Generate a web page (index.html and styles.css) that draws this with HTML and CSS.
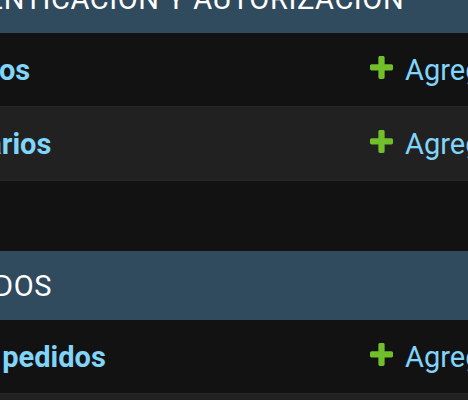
FILE: index.html
```html
<!DOCTYPE html>
<html lang="es">
<head>
<meta charset="utf-8">
<title>Administración</title>
<link rel="stylesheet" href="styles.css">
</head>
<body>
<div class="content">
  <div class="module first">
    <div class="caption">Autenticación y autorización</div>
    <div class="row">
      <a class="name" href="#">Grupos</a>
      <a class="add" href="#"><svg class="plus" viewBox="192 192 1408 1408" width="23" height="23"><path fill="#70bf2b" d="M1600 796v192q0 40-28 68t-68 28h-416v416q0 40-28 68t-68 28h-192q-40 0-68-28t-28-68v-416h-416q-40 0-68-28t-28-68v-192q0-40 28-68t68-28h416v-416q0-40 28-68t68-28h192q40 0 68 28t28 68v416h416q40 0 68 28t28 68z"/></svg>Agregar</a>
      <a class="change" href="#">Modificar</a>
    </div>
    <div class="row alt">
      <a class="name" href="#">Usuarios</a>
      <a class="add" href="#"><svg class="plus" viewBox="192 192 1408 1408" width="23" height="23"><path fill="#70bf2b" d="M1600 796v192q0 40-28 68t-68 28h-416v416q0 40-28 68t-68 28h-192q-40 0-68-28t-28-68v-416h-416q-40 0-68-28t-28-68v-192q0-40 28-68t68-28h416v-416q0-40 28-68t68-28h192q40 0 68 28t28 68v416h416q40 0 68 28t28 68z"/></svg>Agregar</a>
      <a class="change" href="#">Modificar</a>
    </div>
  </div>
  <div class="module">
    <div class="caption">Pedidos</div>
    <div class="row">
      <a class="name" href="#">Ítem pedidos</a>
      <a class="add" href="#"><svg class="plus" viewBox="192 192 1408 1408" width="23" height="23"><path fill="#70bf2b" d="M1600 796v192q0 40-28 68t-68 28h-416v416q0 40-28 68t-68 28h-192q-40 0-68-28t-28-68v-416h-416q-40 0-68-28t-28-68v-192q0-40 28-68t68-28h416v-416q0-40 28-68t68-28h192q40 0 68 28t28 68v416h416q40 0 68 28t28 68z"/></svg>Agregar</a>
      <a class="change" href="#">Modificar</a>
    </div>
    <div class="row alt">
      <a class="name" href="#">Pedidos</a>
      <a class="add" href="#">Agregar</a>
      <a class="change" href="#">Modificar</a>
    </div>
  </div>
</div>
</body>
</html>
```
FILE: styles.css
```css
html, body {
  margin: 0;
  padding: 0;
  background: #121212;
  overflow: hidden;
}

body {
  font-family: Roboto, "Noto Sans", sans-serif;
  width: 468px;
  height: 400px;
}

.content {
  margin-left: -72px;
  width: 760px;
}

.module {
  margin-bottom: 70px;
}

.module.first {
  margin-top: -36px;
}

.caption {
  height: 69px;
  box-sizing: border-box;
  padding-left: 2px;
  background: #304b5e;
  color: #ffffff;
  font-size: 29px;
  letter-spacing: 0.6px;
  text-transform: uppercase;
  display: flex;
  align-items: center;
}

.row {
  display: grid;
  grid-template-columns: 442px 180px 1fr;
  align-items: center;
  height: 74px;
  box-sizing: border-box;
  border-bottom: 1px solid #272727;
  background: #121212;
}

.row.alt {
  background: #212121;
}

.row a {
  color: #81d4fa;
  text-decoration: none;
  font-size: 29px;
  line-height: 36px;
}

.name {
  font-weight: 700;
  padding-left: 8px;
}

.add {
  display: flex;
  align-items: center;
  gap: 12px;
}

.plus {
  flex: none;
  margin-top: -4px;
}
```
